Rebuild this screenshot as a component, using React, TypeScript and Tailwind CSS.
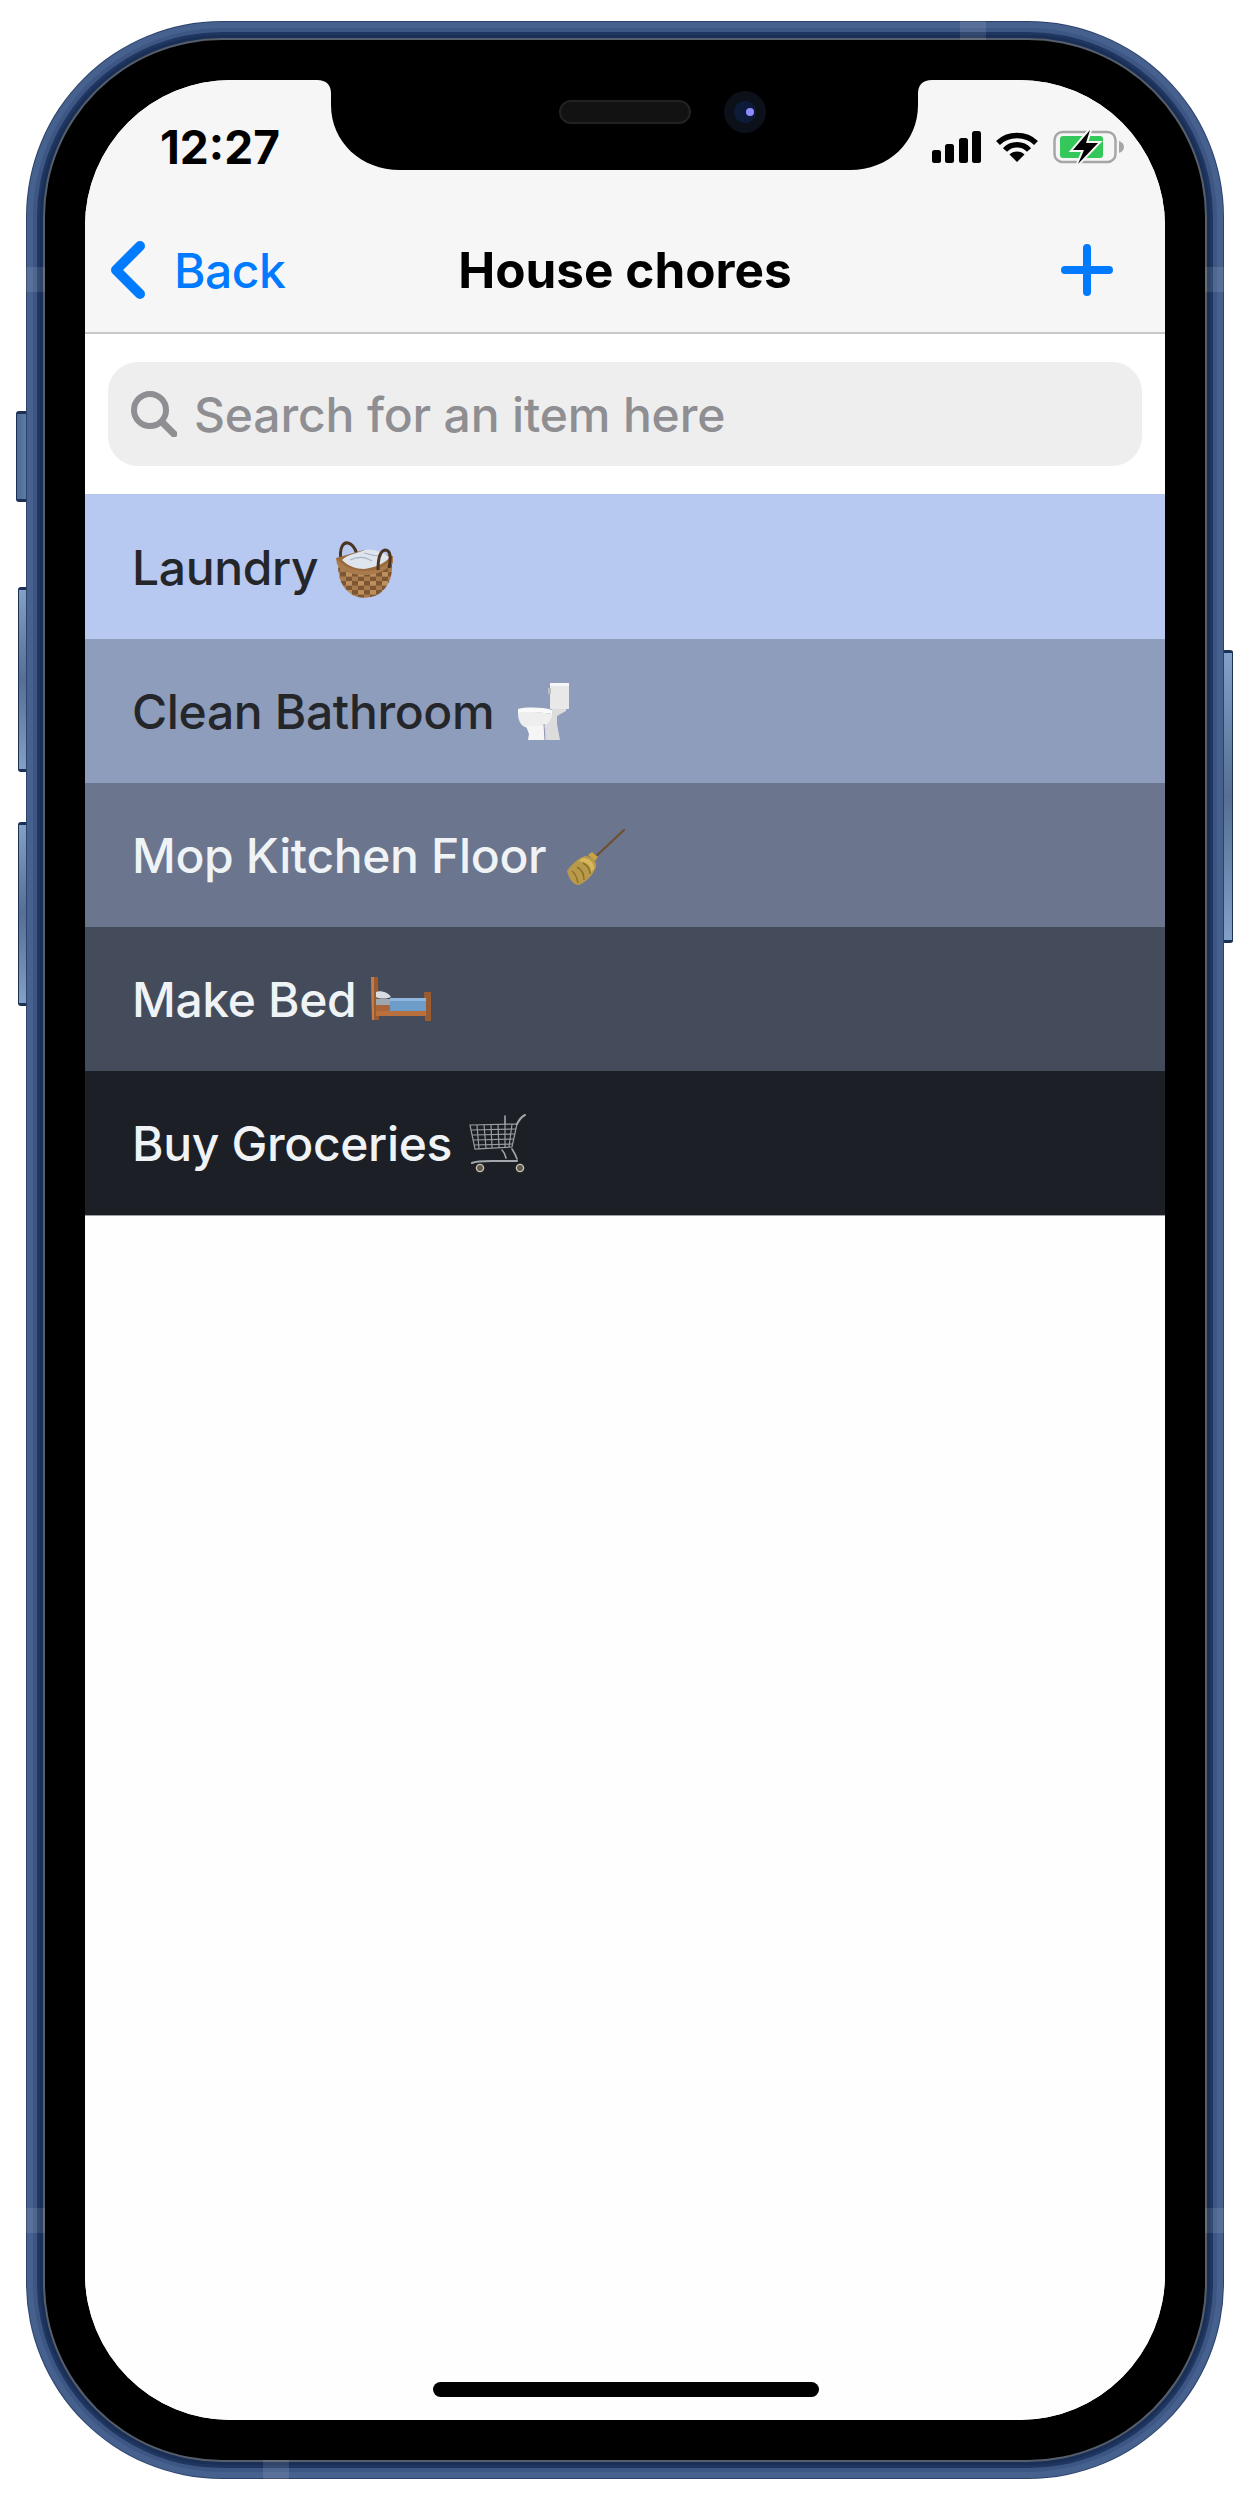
import React from 'react';

// ---- emoji drawings ----
const Basket = () => (
    <svg width="72" height="66" viewBox="0 0 72 66" className="ml-[10px] mt-[4px]">
        <defs>
            <pattern id="weave" width="12" height="9" patternUnits="userSpaceOnUse">
                <rect width="12" height="9" fill="#a97b4c" />
                <rect width="6" height="4.5" fill="#7d5733" />
                <rect x="6" y="4.5" width="6" height="4.5" fill="#7d5733" />
                <rect x="6" width="6" height="4.5" fill="#bd8f5c" />
            </pattern>
        </defs>
        <path d="M13 25C11 12 15 6 20 7C25 8 27 12 29 18" fill="none" stroke="#4a3523" strokeWidth="3" />
        <path d="M8 22L36 14L65 20L62 33L36 38L11 33Z" fill="#9a6a3a" />
        <path d="M14 24C20 18 30 17 37 14C44 12 54 16 62 21C56 29 44 32 36 33C28 33 20 30 14 24Z" fill="#dfe5ee" />
        <path d="M22 24C30 20 38 21 44 25M36 17C42 19 46 20 54 20" fill="none" stroke="#aab3c2" strokeWidth="1.2" />
        <path d="M10 29C22 37 50 38 64 27C65 43 59 52 51 58C42 63 30 63 23 58C14 52 10 42 10 29Z" fill="url(#weave)" />
        <path d="M8 22C18 33 26 34 36 35C46 35 58 32 65 20L65 27C56 37 46 39 36 39C26 39 15 36 9 28Z" fill="#a97b4c" />
        <path d="M50 34C50 24 52 15 57 14C63 14 63 22 61 32" fill="none" stroke="#4a3523" strokeWidth="3" />
    </svg>
);

const Toilet = () => (
    <svg width="66" height="70" viewBox="0 0 66 70" className="ml-[16px] mt-[3px]">
        <path d="M40 5H59V31H40Z" fill="#e8e8e8" />
        <path d="M40 5H59V8H40Z" fill="#f7f7f7" />
        <path d="M38 10H41V16H38Z" fill="#bdbdbd" />
        <path d="M42 31H56V33L47 38L47 46L50 62H34L36 46Z" fill="#dcdcdc" />
        <path d="M8 31C16 29 32 29 42 32L42 36C32 34 16 34 8 36Z" fill="#fafafa" />
        <path d="M8 35C14 33 34 34 42 36C42 44 34 50 28 50H20C12 50 8 44 8 35Z" fill="#eeeeee" />
        <path d="M16 48H36L34 56L35 62H18L19 56Z" fill="#f5f5f5" />
        <path d="M34 46L35 62" stroke="#8f99b5" strokeWidth="1" fill="none" />
    </svg>
);

const Broom = () => (
    <svg width="58" height="56" viewBox="0 0 58 56" className="ml-[21px] mt-[3px]">
        <path d="M57 1L25 31" stroke="#6e5030" strokeWidth="2.2" strokeLinecap="round" />
        <path d="M18 27C24 27 30 32 29 38C26 46 20 52 12 56C6 56 2 50 0 42C4 36 10 30 18 27Z" fill="#b89a4a" />
        <path d="M10 38C14 40 17 45 17 51M5 42C8 44 10 49 11 54M16 34C20 36 23 40 23 45" stroke="#8a6f2a" strokeWidth="1.4" fill="none" />
        <path d="M11 33C17 31 25 37 24 43L27 40C28 34 22 28 15 29Z" fill="#d6b85a" />
        <path d="M21 26L25 23L31 28L28 32Z" fill="#c7a43f" />
    </svg>
);

const Bed = () => (
    <svg width="72" height="60" viewBox="0 0 72 60" className="ml-[10px] mt-[1px]">
        <path d="M5 7H12L13 50H6Z" fill="#9a5b31" />
        <path d="M5 7H8L8 50H6Z" fill="#c47c48" />
        <path d="M58 22H65V51H59Z" fill="#9a5b31" />
        <path d="M10 41H60V46H10Z" fill="#b8703e" />
        <path d="M10 35H24V41H10Z" fill="#a8663a" />
        <path d="M10 29H30V35H10Z" fill="#9ea6b0" />
        <path d="M10 22C14 20 22 22 25 27C20 29 14 29 10 27Z" fill="#d8dde4" />
        <path d="M24 28H60V41H24Z" fill="#6e9cc9" />
        <path d="M24 28H60V31H24Z" fill="#8fb6dc" />
    </svg>
);

const Cart = () => (
    <svg width="72" height="70" viewBox="0 0 72 70" className="ml-[10px] mt-[3px]">
        <g fill="none" stroke="#9a9da1" strokeWidth="1.2">
            <path d="M8 15L55 14L50 37L13 39Z" />
            <path d="M9 20L54 19M10 25L53 24M11 30L52 29M12 35L51 34" />
            <path d="M15 15L17 39M22 15L24 38M29 15L30 38M36 15L37 38M43 14L43 37M50 14L47 37" />
        </g>
        <g fill="none" stroke="#a3a6aa" strokeWidth="1.6" strokeLinecap="round">
            <path d="M55 14C57 10 59 7 63 5" strokeWidth="2" />
            <path d="M43 14L43 6" />
            <path d="M40 40C42 42 43 44 44 48M50 39C52 42 54 46 55 49" />
            <path d="M10 53C14 51 20 51 30 51H55" strokeWidth="2.2" />
        </g>
        <circle cx="18" cy="58" r="3.6" fill="#5f5a50" stroke="#c9c3b2" strokeWidth="1.4" />
        <circle cx="58" cy="58" r="3.6" fill="#5f5a50" stroke="#c9c3b2" strokeWidth="1.4" />
    </svg>
);

const chores = [
    { label: 'Laundry', height: 'h-[145px]', bg: 'bg-[#b7c8f1]', text: 'text-[#25262a]', emoji: <Basket /> },
    { label: 'Clean Bathroom', height: 'h-[144px]', bg: 'bg-[#8f9dbd]', text: 'text-[#25262a]', emoji: <Toilet /> },
    { label: 'Mop Kitchen Floor', height: 'h-[144px]', bg: 'bg-[#6b758d]', text: 'text-[#eff3f5]', emoji: <Broom /> },
    { label: 'Make Bed', height: 'h-[144px]', bg: 'bg-[#444b5a]', text: 'text-[#eff3f5]', emoji: <Bed /> },
    { label: 'Buy Groceries', height: 'h-[144px]', bg: 'bg-[#1c1f26]', text: 'text-[#eff3f5]', emoji: <Cart /> },
];

const StatusIcons = () => (
    <div className="flex items-center gap-[14px]">
        {/* signal */}
        <svg width="49" height="32" viewBox="0 0 49 32">
            <rect x="0" y="19" width="9" height="13" rx="2.5" fill="#000" />
            <rect x="13" y="13" width="9" height="19" rx="2.5" fill="#000" />
            <rect x="27" y="7" width="9" height="25" rx="2.5" fill="#000" />
            <rect x="40" y="0" width="9" height="32" rx="2.5" fill="#000" />
        </svg>
        {/* wifi */}
        <svg width="44" height="32" viewBox="0 0 44 32" fill="none" stroke="#000" strokeWidth="5.5">
            <path d="M3 12C13 2 31 2 41 12" />
            <path d="M10 19C16 12 28 12 34 19" />
            <path d="M22 31L14.5 23.5C18 19.5 26 19.5 29.5 23.5Z" fill="#000" stroke="none" />
        </svg>
        {/* battery charging */}
        <svg width="71" height="34" viewBox="0 0 71 34">
            <rect x="1.5" y="2" width="61" height="30" rx="8" fill="none" stroke="#a6a6a6" strokeWidth="2.5" />
            <rect x="7" y="6" width="43" height="22" rx="3" fill="#34c759" />
            <path d="M66 11C69 12 71 14 71 17C71 20 69 22 66 23Z" fill="#a6a6a6" />
            <path d="M37 0L20 20H31L25 34L45 13H33Z" fill="#000" stroke="#f6f6f6" strokeWidth="4" paintOrder="stroke" />
        </svg>
    </div>
);

const Notch = () => (
    <>
        <svg width="615" height="90" viewBox="0 0 615 90" className="absolute top-0 left-[232px]">
            <path d="M0 0Q14 0 14 14V25C14 62 44 90 83 90H533C572 90 601 62 601 25V14Q601 0 615 0Z" fill="#000" />
        </svg>
        {/* speaker */}
        <div className="absolute top-[20px] left-[474px] w-[132px] h-[24px] rounded-full bg-[#121212] border-2 border-[#222222]" />
        {/* camera */}
        <div className="absolute top-[11px] left-[639px] w-[42px] h-[42px] rounded-full bg-[#0b1019] flex items-center justify-center">
            <div className="w-[22px] h-[22px] rounded-full bg-[#0e1a3a] flex items-center justify-center">
                <div className="w-[8px] h-[8px] rounded-full bg-[#8f8cff] ml-[9px]" />
            </div>
        </div>
    </>
);

const sideButton = 'absolute border-y-[3px] border-[#1b3054] bg-gradient-to-b from-[#83a0c8] via-[#566f92] to-[#83a0c8]';

const App: React.FC = () => {
    return (
        <div className="w-[1250px] h-[2504px] bg-white pt-[21px] pl-[26px] font-['Inter',sans-serif]">
            <div className="relative w-[1198px] h-[2458px]">
                {/* Side buttons */}
                <div className="absolute left-[-10px] top-[390px] w-[11px] h-[91px] rounded-l-[3px] border-y-[3px] border-l border-[#1b3054] bg-gradient-to-r from-[#4c6a94] to-[#5f7ea6]" />
                <div className={`${sideButton} left-[-8px] top-[566px] w-[9px] h-[185px] rounded-l-[3px] border-l`} />
                <div className={`${sideButton} left-[-8px] top-[801px] w-[9px] h-[184px] rounded-l-[3px] border-l`} />
                <div className={`${sideButton} right-[-9px] top-[629px] w-[10px] h-[293px] rounded-r-[3px] border-r`} />

                {/* Frame bevel */}
                <div className="relative h-full rounded-[196px] bg-[#2c426c] p-[1px]">
                    <div className="h-full rounded-[195px] bg-[#47618f] p-[6px]">
                        <div className="h-full rounded-[189px] bg-[#3d5683] p-[4px]">
                            <div className="h-full rounded-[185px] bg-[#1f3660] p-[3px]">
                                <div className="h-full rounded-[182px] bg-[#1a2f55] p-[3px]">
                                    <div className="h-full rounded-[179px] bg-[#565e6c] p-[2px]">
                                        <div className="h-full rounded-[177px] bg-black p-[40px]">
                                            {/* Screen */}
                                            <div className="relative h-full rounded-[146px] overflow-hidden bg-white flex flex-col">
                                                <div className="h-[254px] bg-[#f6f6f6] border-b-2 border-[#c8c8c8] flex flex-col shrink-0">
                                                    <div className="h-[134px] flex items-center justify-between pl-[75px] pr-[41px]">
                                                        <span className="text-[46px] font-bold text-black leading-none">12:27</span>
                                                        <StatusIcons />
                                                    </div>
                                                    <div className="h-[112px] grid grid-cols-3 items-center">
                                                        <div className="flex items-center gap-[29px] pl-[26px]">
                                                            <svg width="34" height="58" viewBox="0 0 34 58" fill="none" stroke="#007aff" strokeWidth="10" strokeLinecap="round" strokeLinejoin="round">
                                                                <path d="M29 5L5 29L29 53" />
                                                            </svg>
                                                            <span className="text-[48px] font-medium tracking-[-0.5px] text-[#007aff] leading-none mt-[2px]">Back</span>
                                                        </div>
                                                        <span className="text-[49.5px] font-bold text-black text-center leading-none whitespace-nowrap mt-[1px]">House chores</span>
                                                        <div className="flex justify-end pr-[52px]">
                                                            <svg width="52" height="52" viewBox="0 0 52 52" stroke="#007aff" strokeWidth="8" strokeLinecap="round">
                                                                <path d="M26 4V48M4 26H48" />
                                                            </svg>
                                                        </div>
                                                    </div>
                                                </div>

                                                {/* Search */}
                                                <div className="px-[23px] py-[28px] shrink-0">
                                                    <div className="h-[104px] rounded-[30px] bg-[#eeeeee] flex items-center pl-[23px] gap-[17px]">
                                                        <svg width="46" height="46" viewBox="0 0 46 46" fill="none" stroke="#8e8e93" strokeWidth="6" strokeLinecap="round">
                                                            <circle cx="19" cy="19" r="16" />
                                                            <path d="M31 31L43 43" strokeWidth="7" />
                                                        </svg>
                                                        <span className="text-[48px] font-medium tracking-[-0.15px] text-[#8e8e93] leading-none mt-[2px]">Search for an item here</span>
                                                    </div>
                                                </div>

                                                {/* Chores list */}
                                                <div className="shrink-0 border-b border-[#a0a2a6]">
                                                    {chores.map((chore) => (
                                                        <div key={chore.label} className={`flex items-center pl-[47px] ${chore.height} ${chore.bg}`}>
                                                            <span className={`text-[48px] font-medium tracking-[-0.35px] leading-none whitespace-nowrap mt-[2px] ${chore.text}`}>{chore.label}</span>
                                                            {chore.emoji}
                                                        </div>
                                                    ))}
                                                </div>

                                                <div className="flex-1 bg-[#fefefe]" />

                                                <div className="absolute bottom-[23px] left-[348px] w-[386px] h-[15px] rounded-full bg-black" />
                                                <Notch />
                                            </div>
                                        </div>
                                    </div>
                                </div>
                            </div>
                        </div>
                    </div>

                    {/* Antenna bands */}
                    <div className="absolute left-0 top-[246px] w-[19px] h-[25px] bg-white/10" />
                    <div className="absolute right-0 top-[246px] w-[19px] h-[25px] bg-white/10" />
                    <div className="absolute left-0 top-[2187px] w-[19px] h-[25px] bg-white/10" />
                    <div className="absolute right-0 top-[2187px] w-[19px] h-[25px] bg-white/10" />
                    <div className="absolute top-0 left-[934px] w-[26px] h-[19px] bg-white/10" />
                    <div className="absolute bottom-0 left-[237px] w-[26px] h-[19px] bg-white/10" />
                </div>
            </div>
        </div>
    );
};

export default App;
